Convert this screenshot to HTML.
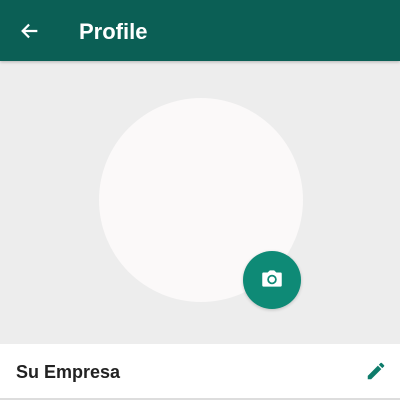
<!DOCTYPE html>
<html><head><style>
body{margin:0;width:400px;height:400px;background:#ededed;position:relative;overflow:hidden;font-family:"Liberation Sans",sans-serif}
.hdr{position:absolute;left:0;top:0;width:400px;height:61px;background:#0b5f55;box-shadow:0 1px 3px rgba(0,0,0,.25)}
.title{position:absolute;left:79px;top:19px;color:#fff;font-size:22px;font-weight:bold}
.av{position:absolute;left:99px;top:98px;width:204px;height:204px;border-radius:50%;background:#fbf9f9}
.cam{position:absolute;left:243px;top:251px;width:58px;height:58px;border-radius:50%;background:#0e8a76;box-shadow:0 1px 3px rgba(0,0,0,.2)}
.bar{position:absolute;left:0;top:344px;width:400px;height:54px;background:#fff}
.name{position:absolute;left:16px;top:18px;font-size:18px;font-weight:bold;color:#222}
.line{position:absolute;left:0;top:398px;width:400px;height:2px;background:#ddd}
</style></head><body>
<div class="hdr">
<svg style="position:absolute;left:19px;top:20px" width="22" height="22" viewBox="0 0 24 24"><path d="M20 12H5M11 5l-7 7 7 7" stroke="#fff" stroke-width="2.4" fill="none"/></svg>
<div class="title">Profile</div>
</div>
<div class="av"></div>
<div class="cam"><svg style="position:absolute;left:16px;top:15px" width="26" height="26" viewBox="0 0 24 24"><path d="M4 6h4l2-2h4l2 2h4a1 1 0 0 1 1 1v11a1 1 0 0 1-1 1H4a1 1 0 0 1-1-1V7a1 1 0 0 1 1-1z" fill="#fff"/><circle cx="12" cy="12.5" r="3.6" fill="none" stroke="#0e8a76" stroke-width="1.6"/></svg></div>
<div class="bar"><div class="name">Su Empresa</div>
<svg style="position:absolute;left:365px;top:16px" width="22" height="22" viewBox="0 0 24 24"><path d="M3 17.25V21h3.75L17.8 9.94l-3.75-3.75L3 17.25zM20.7 7.04a1 1 0 0 0 0-1.41l-2.34-2.34a1 1 0 0 0-1.41 0l-1.83 1.83 3.75 3.75 1.83-1.83z" fill="#0e7c6b"/></svg>
</div>
<div class="line"></div>
</body></html>
